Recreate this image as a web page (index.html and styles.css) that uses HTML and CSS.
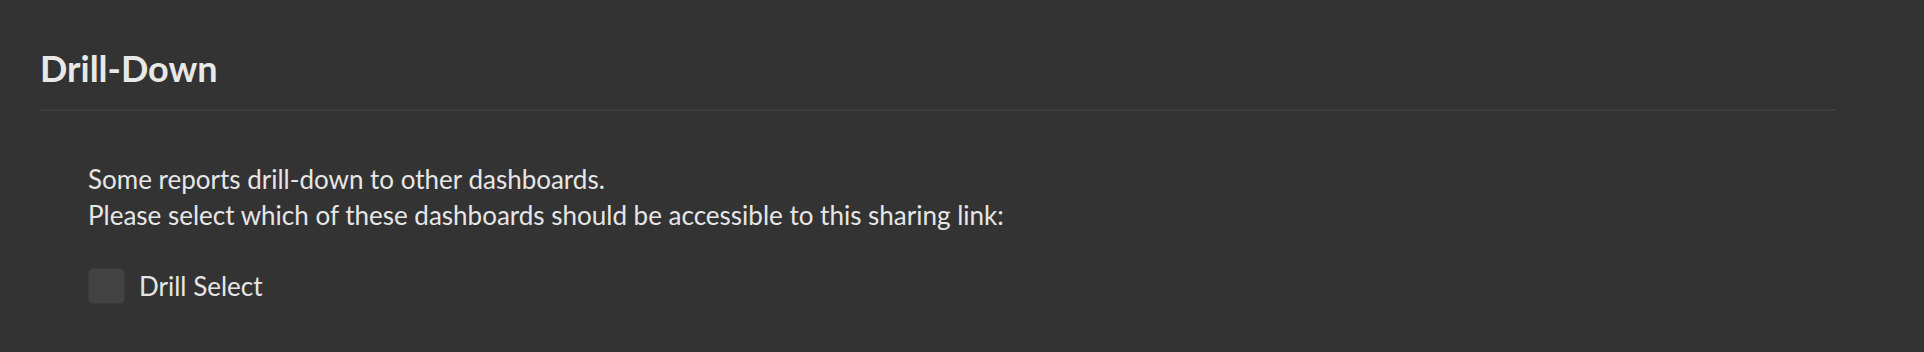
FILE: index.html
```html
<!DOCTYPE html>
<html>
<head>
<meta charset="utf-8">
<link rel="stylesheet" href="styles.css">
</head>
<body>
<div class="page">
  <section class="panel">
    <h2 class="panel-title">Drill-Down</h2>
    <div class="panel-body">
      <p class="intro">Some reports drill-down to other dashboards.<br>Please select which of these dashboards should be accessible to this sharing link:</p>
      <label class="check-row">
        <span class="checkbox"></span>
        <span class="check-label">Drill Select</span>
      </label>
    </div>
  </section>
</div>
</body>
</html>
```
FILE: styles.css
```css
html, body {
  margin: 0;
  padding: 0;
  background: #333333;
  height: 100%;
}
body {
  font-family: Lato, "Open Sans", sans-serif;
  color: #e6e6e6;
}
.page {
  padding: 46px 88px 0 40px;
}
.panel-title {
  margin: 0;
  font-size: 36px;
  font-weight: 700;
  line-height: 44px;
  color: #e8e8e8;
  padding-bottom: 19px;
  border-bottom: 2px solid #3d3d3d;
}
.panel-body {
  padding: 50px 0 0 48px;
}
.intro {
  margin: 0;
  font-size: 26px;
  line-height: 36px;
}
.check-row {
  display: flex;
  align-items: center;
  gap: 14px;
  margin-top: 35px;
}
.checkbox {
  box-sizing: border-box;
  width: 37px;
  height: 36px;
  background: #424242;
  border: 1px solid #3a3a3a;
  border-radius: 5px;
}
.check-label {
  font-size: 26px;
}
```
